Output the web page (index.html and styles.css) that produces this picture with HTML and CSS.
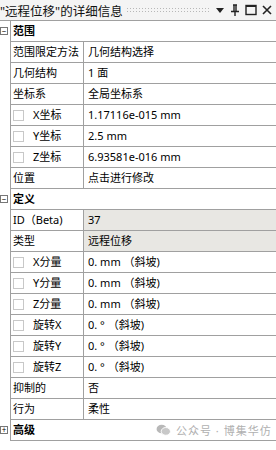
FILE: index.html
```html
<!DOCTYPE html>
<html lang="zh-CN">
<head>
    <meta charset="UTF-8">
    <title>详细信息</title>
    <link rel="stylesheet" href="styles.css">
</head>
<body>
    <div class="panel">
        <div class="titlebar">
            <span class="title">"远程位移"的详细信息</span>
            <span class="grip"></span>
            <span class="tools">
                <svg width="10" height="10" viewBox="0 0 10 10"><path d="M1 3 L9 3 L5 8 Z" fill="#222"/></svg>
                <svg width="10" height="12" viewBox="0 0 10 12"><path d="M3 1 H7 M4 1 V7 M6 1 V7 M1 7.5 H9 M5 8 V12" stroke="#222" stroke-width="1.4" fill="none"/></svg>
                <svg width="12" height="12" viewBox="0 0 12 12"><rect x="1" y="1.5" width="10" height="9" fill="none" stroke="#222" stroke-width="1.4"/><path d="M1 2 H11" stroke="#222" stroke-width="2"/></svg>
                <svg width="10" height="10" viewBox="0 0 10 10"><path d="M1 1 L9 9 M9 1 L1 9" stroke="#222" stroke-width="1.6"/></svg>
            </span>
        </div>

        <div class="group">
            <div class="row head"><span class="toggle">−</span><div class="cells"><span class="sect">范围</span></div></div>
            <div class="row"><span class="gut"></span><div class="cells"><span class="lab">范围限定方法</span><span class="val">几何结构选择</span></div></div>
            <div class="row"><span class="gut"></span><div class="cells"><span class="lab">几何结构</span><span class="val">1 面</span></div></div>
            <div class="row"><span class="gut"></span><div class="cells"><span class="lab">坐标系</span><span class="val">全局坐标系</span></div></div>
            <div class="row"><span class="gut"></span><div class="cells"><span class="lab"><i class="chk"></i>X坐标</span><span class="val">1.17116e-015 mm</span></div></div>
            <div class="row"><span class="gut"></span><div class="cells"><span class="lab"><i class="chk"></i>Y坐标</span><span class="val">2.5 mm</span></div></div>
            <div class="row"><span class="gut"></span><div class="cells"><span class="lab"><i class="chk"></i>Z坐标</span><span class="val">6.93581e-016 mm</span></div></div>
            <div class="row"><span class="gut"></span><div class="cells"><span class="lab">位置</span><span class="val">点击进行修改</span></div></div>
        </div>

        <div class="group">
            <div class="row head"><span class="toggle">−</span><div class="cells"><span class="sect">定义</span></div></div>
            <div class="row"><span class="gut"></span><div class="cells"><span class="lab">ID（Beta)</span><span class="val ro">37</span></div></div>
            <div class="row"><span class="gut"></span><div class="cells"><span class="lab">类型</span><span class="val ro">远程位移</span></div></div>
            <div class="row"><span class="gut"></span><div class="cells"><span class="lab"><i class="chk"></i>X分量</span><span class="val">0. mm （斜坡)</span></div></div>
            <div class="row"><span class="gut"></span><div class="cells"><span class="lab"><i class="chk"></i>Y分量</span><span class="val">0. mm （斜坡)</span></div></div>
            <div class="row"><span class="gut"></span><div class="cells"><span class="lab"><i class="chk"></i>Z分量</span><span class="val">0. mm （斜坡)</span></div></div>
            <div class="row"><span class="gut"></span><div class="cells"><span class="lab"><i class="chk"></i>旋转X</span><span class="val">0. ° （斜坡)</span></div></div>
            <div class="row"><span class="gut"></span><div class="cells"><span class="lab"><i class="chk"></i>旋转Y</span><span class="val">0. ° （斜坡)</span></div></div>
            <div class="row"><span class="gut"></span><div class="cells"><span class="lab"><i class="chk"></i>旋转Z</span><span class="val">0. ° （斜坡)</span></div></div>
            <div class="row"><span class="gut"></span><div class="cells"><span class="lab">抑制的</span><span class="val">否</span></div></div>
            <div class="row"><span class="gut"></span><div class="cells"><span class="lab">行为</span><span class="val">柔性</span></div></div>
        </div>

        <div class="group">
            <div class="row head"><span class="toggle">+</span><div class="cells"><span class="sect">高级</span></div></div>
        </div>

        <div class="mark">
            <svg width="15" height="12" viewBox="0 0 16 13"><ellipse cx="6" cy="5.5" rx="5.5" ry="4.6" fill="#b8b8b8"/><ellipse cx="10.5" cy="8" rx="5" ry="4.2" fill="#c8c8c8" stroke="#fff" stroke-width="1"/></svg>
            <span>公众号 · 博集华仿</span>
        </div>
    </div>
</body>
</html>
```

FILE: styles.css
```css
body {
    margin: 0;
    background: #fff;
    font-family: "Noto Sans", "Noto Sans CJK SC", sans-serif;
    font-size: 11px;
    color: #000;
}
.panel {
    position: relative;
    width: 276px;
    height: 450px;
    overflow: hidden;
}
.titlebar {
    display: flex;
    align-items: center;
    height: 20px;
    border-bottom: 1px solid #a0a0a0;
    background: #f4f4f4;
}
.title {
    font-size: 12.5px;
    white-space: nowrap;
    color: #111;
}
.grip {
    flex: 1;
    height: 6px;
    margin: 0 4px 0 3px;
    background-image: radial-gradient(circle, #b8b8b8 0.7px, transparent 0.8px);
    background-size: 3px 3px;
}
.tools {
    display: flex;
    align-items: center;
    gap: 5px;
    padding-right: 4px;
}
.row {
    display: flex;
    height: 21px;
}
.toggle {
    width: 8px;
    height: 8px;
    margin: 6px 2px 0 0;
    border: 1px solid #777;
    box-sizing: border-box;
    font-size: 8px;
    line-height: 6px;
    text-align: center;
    color: #000;
}
.gut {
    width: 10px;
}
.cells {
    flex: 1;
    display: flex;
    border-left: 1px solid #a0a0a0;
    border-bottom: 1px solid #a0a0a0;
    line-height: 20px;
    white-space: nowrap;
}
.sect {
    padding-left: 2px;
    font-weight: bold;
}
.lab {
    display: flex;
    align-items: center;
    width: 70px;
    padding-left: 2px;
    border-right: 1px solid #a0a0a0;
}
.val {
    flex: 1;
    padding-left: 4px;
}
.ro {
    background: #e8e7e3;
}
.chk {
    width: 11px;
    height: 11px;
    margin-right: 9px;
    border: 1px solid #c8c8c8;
    box-sizing: border-box;
}
.mark {
    position: absolute;
    left: 156px;
    top: 422px;
    display: flex;
    align-items: center;
    gap: 5px;
    color: #b0b0b0;
    font-size: 11px;
    white-space: nowrap;
    letter-spacing: 1px;
}
```
